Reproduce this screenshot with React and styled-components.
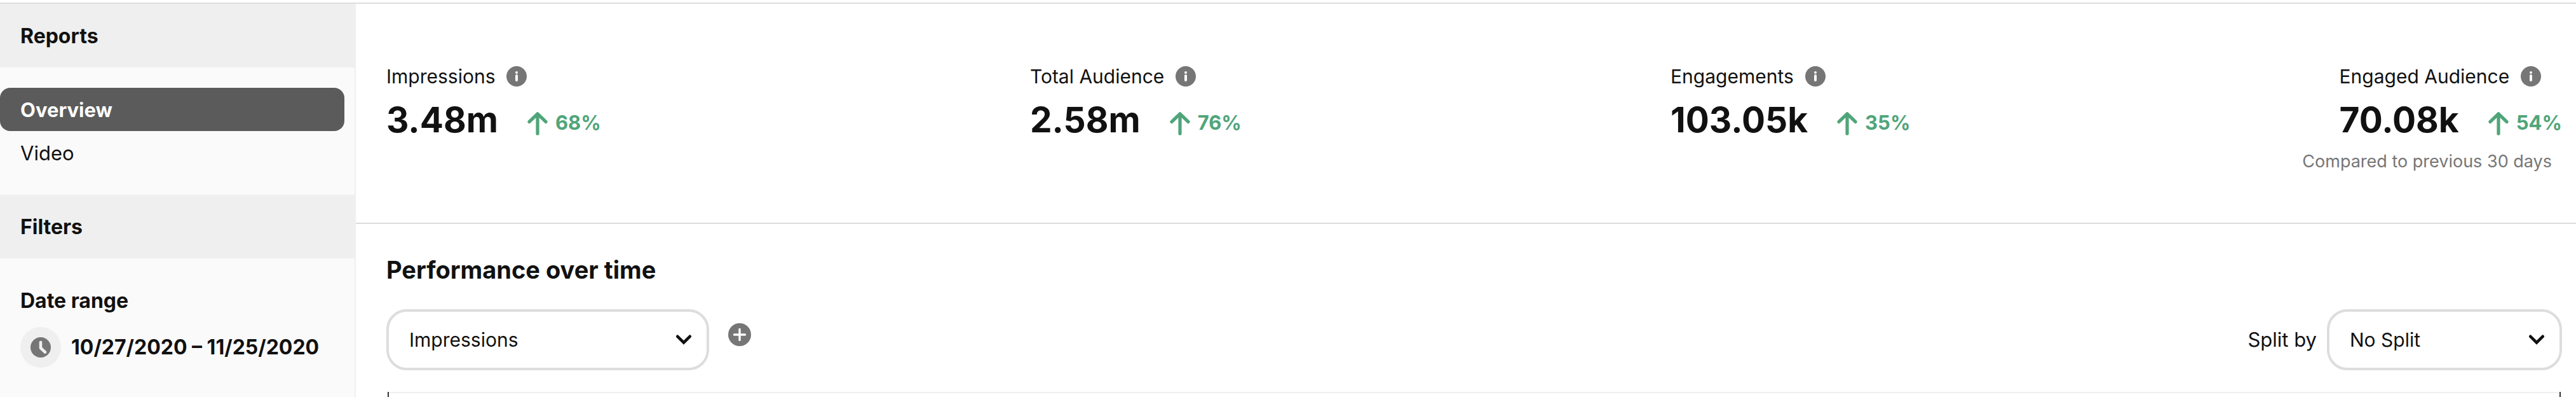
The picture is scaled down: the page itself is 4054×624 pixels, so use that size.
import React from "react";
import styled, { createGlobalStyle } from "styled-components";

const color = {
  text: "#111111",
  muted: "#767676",
  line: "#dddddd",
  wash: "#efefef",
  sidebar: "#fafafa",
  active: "#5b5b5b",
  up: "#4fa579",
};

const GlobalStyle = createGlobalStyle`
  *, *::before, *::after { box-sizing: border-box; }
  body {
    margin: 0;
    background: #ffffff;
    color: ${color.text};
    font-family: Inter, "Liberation Sans", sans-serif;
    font-size: 31px;
    line-height: 40px;
  }
  button, select { font: inherit; color: inherit; }
  h1, h2, h3, p, dl, dd, dt, ul { margin: 0; padding: 0; }
`;

const Page = styled.div`
  display: flex;
  flex-direction: column;
  min-height: 100vh;
  padding-top: 4px;
`;

const Body = styled.div`
  flex: 1;
  display: flex;
  border-top: 2px solid ${color.line};
`;

const Sidebar = styled.aside`
  flex: 0 0 560px;
  background: ${color.sidebar};
  border-right: 2px solid ${color.wash};
`;

const SidebarHeading = styled.h2`
  padding: 31px 32px 29px;
  margin-right: -2px;
  background: ${color.wash};
  font-size: 32px;
  font-weight: 700;
`;

const Nav = styled.nav`
  display: flex;
  flex-direction: column;
  padding: 32px 16px 32px 0;
`;

const NavLink = styled.a`
  padding: 15px 32px 13px;
  border-radius: 16px;
  text-decoration: none;
  color: ${(p) => (p.$active ? "#ffffff" : color.text)};
  background: ${(p) => (p.$active ? color.active : "transparent")};
  font-weight: ${(p) => (p.$active ? 700 : 400)};
`;

const Filter = styled.section`
  display: flex;
  flex-direction: column;
  align-items: flex-start;
  gap: 21px;
  padding: 47px 32px 0;
`;

const FilterTitle = styled.h3`
  font-size: 32px;
  font-weight: 700;
`;

const DateButton = styled.button`
  display: flex;
  align-items: center;
  gap: 16px;
  padding: 0;
  border: 0;
  background: none;
  font-size: 32px;
  font-weight: 700;
  white-space: nowrap;
  cursor: pointer;
`;

const ClockBadge = styled.span`
  display: grid;
  place-items: center;
  width: 64px;
  height: 64px;
  border-radius: 50%;
  background: ${color.wash};
`;

const Main = styled.main`
  flex: 1;
  min-width: 0;
  display: flex;
  flex-direction: column;
`;

const Summary = styled.section`
  padding: 94px 22px 78px 48px;
  border-bottom: 2px solid ${color.line};
`;

const Stats = styled.dl`
  display: flex;
  justify-content: space-between;
`;

const Stat = styled.div`
  display: flex;
  flex-direction: column;
`;

const StatLabel = styled.dt`
  display: flex;
  align-items: center;
  gap: 18px;
  height: 40px;
  font-size: 30px;
`;

const StatValue = styled.dd`
  display: flex;
  align-items: center;
  height: 96px;
  font-size: 55px;
  line-height: 96px;
  font-weight: 700;
`;

const Trend = styled.span`
  display: flex;
  align-items: flex-end;
  gap: 12px;
  margin: 10px 0 0 46px;
  color: ${color.up};
  font-size: 31px;
  line-height: 40px;
  font-weight: 700;
`;

const Note = styled.p`
  padding-right: 16px;
  color: ${color.muted};
  font-size: 27px;
  line-height: 36px;
  text-align: right;
`;

const IconButton = styled.button`
  display: flex;
  padding: 0;
  border: 0;
  background: none;
  color: ${color.muted};
  cursor: pointer;
`;

const Performance = styled.section`
  flex: 1;
  display: flex;
  flex-direction: column;
  padding: 48px 22px 0 48px;
`;

const Title = styled.h1`
  font-size: 38px;
  line-height: 48px;
  font-weight: 700;
`;

const Controls = styled.div`
  display: flex;
  justify-content: space-between;
  margin: 38px 0 34px;
`;

const MetricGroup = styled.div`
  display: flex;
  align-items: flex-start;
  gap: 30px;

  ${IconButton} { margin-top: 22px; }
`;

const SplitGroup = styled.div`
  display: flex;
  align-items: center;
  gap: 16px;
`;

const SelectBox = styled.span`
  display: grid;
  align-items: center;
  width: ${(p) => p.$width};

  > * { grid-area: 1 / 1; }
  > svg {
    justify-self: end;
    margin-right: 28px;
    pointer-events: none;
  }
`;

const Select = styled.select`
  appearance: none;
  width: 100%;
  height: 96px;
  padding: 0 64px 0 32px;
  border: 4px solid ${color.line};
  border-radius: 32px;
  background: #ffffff;
  font-size: 30px;
`;

const Chart = styled.div`
  flex: 1;
  min-height: 8px;
  margin: 0 2px;
  border: solid #333333;
  border-width: 0 2px;

  &::before {
    content: "";
    display: block;
    height: 2px;
    background: ${color.wash};
  }
`;

const InfoIcon = () => (
  <svg width="32" height="32" viewBox="0 0 32 32" aria-hidden="true">
    <circle cx="16" cy="16" r="16" fill="currentColor" />
    <circle cx="16" cy="10" r="2" fill="#fff" />
    <path d="M16 15v7" stroke="#fff" strokeWidth="4" strokeLinecap="round" />
  </svg>
);

const PlusIcon = () => (
  <svg width="36" height="36" viewBox="0 0 36 36" aria-hidden="true">
    <circle cx="18" cy="18" r="18" fill="currentColor" />
    <path d="M18 9.5v17M9.5 18h17" stroke="#fff" strokeWidth="3.4" strokeLinecap="round" />
  </svg>
);

const ClockIcon = () => (
  <svg width="32" height="32" viewBox="0 0 32 32" aria-hidden="true">
    <circle cx="16" cy="16" r="16" fill={color.muted} />
    <path
      d="M16 8v9l7 6.5"
      fill="none"
      stroke={color.wash}
      strokeWidth="4.6"
      strokeLinecap="round"
      strokeLinejoin="round"
    />
  </svg>
);

const ArrowIcon = () => (
  <svg width="32" height="38" viewBox="0 0 32 38" aria-hidden="true">
    <path
      d="M16 35V5M3 16.4 16 3.8 29 16.4"
      fill="none"
      stroke="currentColor"
      strokeWidth="5.2"
      strokeLinecap="round"
      strokeLinejoin="round"
    />
  </svg>
);

const ChevronIcon = () => (
  <svg width="24" height="16" viewBox="0 0 24 16" aria-hidden="true">
    <path
      d="M2.3 2.8 12 12.4l9.7-9.6"
      fill="none"
      stroke={color.text}
      strokeWidth="4.6"
      strokeLinecap="round"
    />
  </svg>
);

const stats = [
  { label: "Impressions", value: "3.48m", change: "68%" },
  { label: "Total Audience", value: "2.58m", change: "76%" },
  { label: "Engagements", value: "103.05k", change: "35%" },
  { label: "Engaged Audience", value: "70.08k", change: "54%" },
];

export default function App() {
  return (
    <>
      <GlobalStyle />
      <Page>
        <Body>
          <Sidebar>
            <SidebarHeading>Reports</SidebarHeading>
            <Nav>
              <NavLink href="#overview" $active aria-current="page">Overview</NavLink>
              <NavLink href="#video">Video</NavLink>
            </Nav>
            <SidebarHeading>Filters</SidebarHeading>
            <Filter>
              <FilterTitle>Date range</FilterTitle>
              <DateButton type="button">
                <ClockBadge><ClockIcon /></ClockBadge>
                10/27/2020 – 11/25/2020
              </DateButton>
            </Filter>
          </Sidebar>

          <Main>
            <Summary>
              <Stats>
                {stats.map((s) => (
                  <Stat key={s.label}>
                    <StatLabel>
                      {s.label}
                      <IconButton type="button" aria-label={`About ${s.label}`}>
                        <InfoIcon />
                      </IconButton>
                    </StatLabel>
                    <StatValue>
                      {s.value}
                      <Trend><ArrowIcon />{s.change}</Trend>
                    </StatValue>
                  </Stat>
                ))}
              </Stats>
              <Note>Compared to previous 30 days</Note>
            </Summary>

            <Performance>
              <Title>Performance over time</Title>
              <Controls>
                <MetricGroup>
                  <SelectBox $width="508px">
                    <Select aria-label="Metric" defaultValue="Impressions">
                      {stats.map((s) => <option key={s.label}>{s.label}</option>)}
                    </Select>
                    <ChevronIcon />
                  </SelectBox>
                  <IconButton type="button" aria-label="Add metric"><PlusIcon /></IconButton>
                </MetricGroup>
                <SplitGroup>
                  <label htmlFor="split">Split by</label>
                  <SelectBox $width="370px">
                    <Select id="split" defaultValue="No Split">
                      <option>No Split</option>
                    </Select>
                    <ChevronIcon />
                  </SelectBox>
                </SplitGroup>
              </Controls>
              <Chart />
            </Performance>
          </Main>
        </Body>
      </Page>
    </>
  );
}
